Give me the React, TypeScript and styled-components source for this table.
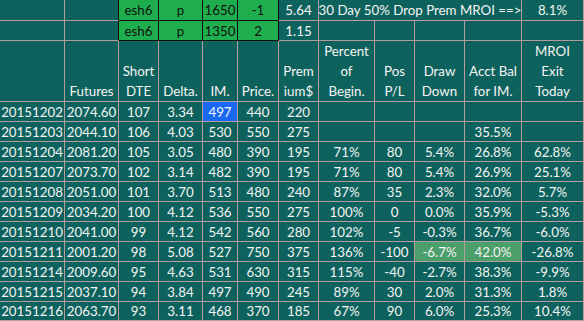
import React from "react";
import styled, { createGlobalStyle } from "styled-components";

const colors = {
  teal: "#0e625d",
  grid: "#b79c9f",
  green: "#1fae4e",
  lightGreen: "#4b9f6b",
  blue: "#1868f5",
  text: "#f4f4f4",
  black: "#101010",
};

const GlobalStyle = createGlobalStyle`
  html, body {
    margin: 0;
    padding: 0;
    background: ${colors.teal};
  }
`;

const Sheet = styled.div`
  display: grid;
  grid-template-columns: 65px 54px 40px 44px 35px 41px 40px 56px 40px 50px 57px 62px;
  grid-template-rows: 21px 20px 61px repeat(10, 20px) 19px;
  width: 584px;
  height: 321px;
  background: ${colors.teal};
  font-family: Lato, "Open Sans", sans-serif;
  font-size: 13.3px;
  color: ${colors.text};
  overflow: hidden;
`;

interface CellProps {
  $bg?: string;
  $right?: string;
  $bottom?: string;
  $span?: number;
  $dark?: boolean;
}

const Cell = styled.div<CellProps>`
  box-sizing: border-box;
  display: flex;
  align-items: center;
  justify-content: center;
  line-height: 20px;
  white-space: nowrap;
  background: ${(p) => p.$bg || colors.teal};
  color: ${(p) => (p.$dark ? colors.black : colors.text)};
  border-right: 1px solid ${(p) => p.$right || colors.grid};
  border-bottom: 1px solid ${(p) => p.$bottom || colors.grid};
  grid-column: ${(p) => (p.$span ? `span ${p.$span}` : "auto")};
`;

const HeadCell = styled(Cell)`
  flex-direction: column;
  justify-content: flex-end;
`;

const ticker = [
  ["esh6", "p", "1650", "-1", "5.64"],
  ["esh6", "p", "1350", "2", "1.15"],
];

const heads = [
  [],
  ["Futures"],
  ["Short", "DTE"],
  ["Delta."],
  ["IM."],
  ["Price."],
  ["Prem", "ium$"],
  ["Percent", "of", "Begin."],
  ["Pos", "P/L"],
  ["Draw", "Down"],
  ["Acct Bal", "for IM."],
  ["MROI", "Exit", "Today"],
];

const rows = [
  ["20151202", "2074.60", "107", "3.34", "497", "440", "220", "", "", "", "", ""],
  ["20151203", "2044.10", "106", "4.03", "530", "550", "275", "", "", "", "35.5%", ""],
  ["20151204", "2081.20", "105", "3.05", "480", "390", "195", "71%", "80", "5.4%", "26.8%", "62.8%"],
  ["20151207", "2073.70", "102", "3.14", "482", "390", "195", "71%", "80", "5.4%", "26.9%", "25.1%"],
  ["20151208", "2051.00", "101", "3.70", "513", "480", "240", "87%", "35", "2.3%", "32.0%", "5.7%"],
  ["20151209", "2034.20", "100", "4.12", "536", "550", "275", "100%", "0", "0.0%", "35.9%", "-5.3%"],
  ["20151210", "2041.00", "99", "4.12", "542", "560", "280", "102%", "-5", "-0.3%", "36.7%", "-6.0%"],
  ["20151211", "2001.20", "98", "5.08", "527", "750", "375", "136%", "-100", "-6.7%", "42.0%", "-26.8%"],
  ["20151214", "2009.60", "95", "4.63", "531", "630", "315", "115%", "-40", "-2.7%", "38.3%", "-9.9%"],
  ["20151215", "2037.10", "94", "3.84", "497", "490", "245", "89%", "30", "2.0%", "31.3%", "1.8%"],
  ["20151216", "2063.70", "93", "3.11", "468", "370", "185", "67%", "90", "6.0%", "25.3%", "10.4%"],
];

const fillFor = (r: number, c: number) => {
  if (r === 0 && c === 4) return colors.blue;
  if (r === 7 && (c === 9 || c === 10)) return colors.lightGreen;
  return undefined;
};

export default function App() {
  return (
    <>
      <GlobalStyle />
      <Sheet>
        {ticker.map((t, i) => (
          <React.Fragment key={"t" + i}>
            <Cell />
            <Cell $right={colors.black} />
            {t.slice(0, 4).map((v, j) => (
              <Cell
                key={j}
                $bg={colors.green}
                $dark
                $right={colors.black}
                $bottom={colors.black}
              >
                {v}
              </Cell>
            ))}
            <Cell>{t[4]}</Cell>
            {i === 0 ? (
              <>
                <Cell $span={4}>30 Day 50% Drop Prem MROI ==&gt;</Cell>
                <Cell>8.1%</Cell>
              </>
            ) : (
              <>
                <Cell />
                <Cell />
                <Cell />
                <Cell />
                <Cell />
              </>
            )}
          </React.Fragment>
        ))}
        {heads.map((h, i) => (
          <HeadCell key={"h" + i}>
            {h.map((line) => (
              <span key={line}>{line}</span>
            ))}
          </HeadCell>
        ))}
        {rows.map((r, ri) =>
          r.map((v, ci) => (
            <Cell key={ri + "-" + ci} $bg={fillFor(ri, ci)}>
              {v}
            </Cell>
          ))
        )}
      </Sheet>
    </>
  );
}
